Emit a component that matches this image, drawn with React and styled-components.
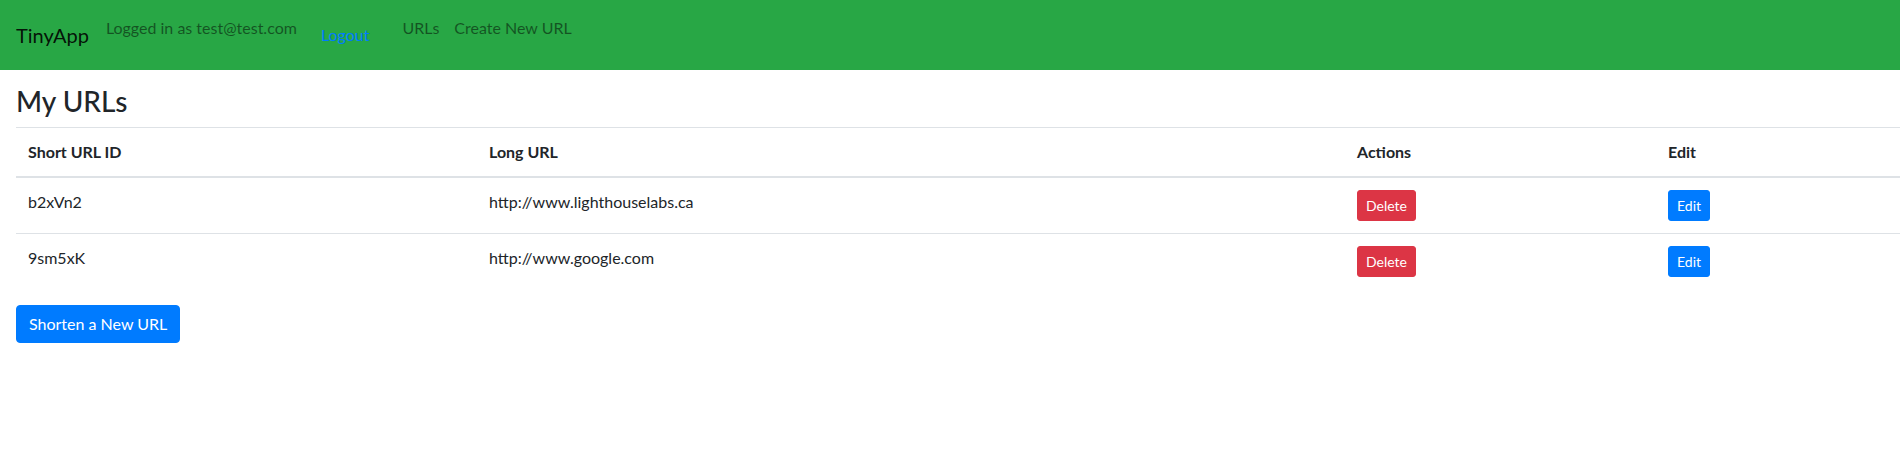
import React from 'react';
import styled, { createGlobalStyle } from 'styled-components';

const GlobalStyle = createGlobalStyle`
  body {
    margin: 0;
    font-family: Lato, "Liberation Sans", sans-serif;
    font-size: 16px;
    line-height: 24px;
    color: #212529;
    background: #ffffff;
  }
`;

const NavBar = styled.nav`
  height: 70px;
  background-color: #28a745;
  display: flex;
  align-items: flex-start;
  padding-left: 16px;
  box-sizing: border-box;
`;

const Brand = styled.div`
  font-size: 20px;
  line-height: 30px;
  padding-top: 20px;
  margin-right: 17px;
  color: rgba(0, 0, 0, 0.9);
`;

const NavText = styled.div`
  padding-top: ${(props) => props.top};
  margin-right: ${(props) => props.gap};
  color: ${(props) => (props.link ? '#007bff' : 'rgba(0, 0, 0, 0.5)')};
  white-space: nowrap;
`;

const Main = styled.div`
  padding-left: 16px;
`;

const Title = styled.h3`
  margin: 15px 0 8px;
  font-size: 28px;
  line-height: 33.6px;
  font-weight: 500;
`;

const Table = styled.table`
  width: 100%;
  table-layout: fixed;
  border-collapse: collapse;
  margin-bottom: 16px;
`;

const Th = styled.th`
  width: ${(props) => props.width || 'auto'};
  text-align: left;
  font-weight: 700;
  padding: 12px;
  border-top: 1px solid #dee2e6;
  border-bottom: 2px solid #dee2e6;
  vertical-align: bottom;
`;

const Td = styled.td`
  padding: 12px;
  border-top: 1px solid #dee2e6;
  vertical-align: top;
`;

const SmallButton = styled.button`
  font-family: inherit;
  font-size: 14px;
  line-height: 21px;
  padding: 4px 8px;
  border: 1px solid ${(props) => props.color};
  border-radius: 3px;
  background-color: ${(props) => props.color};
  color: #ffffff;
  cursor: pointer;
  display: block;
`;

const PrimaryButton = styled.button`
  font-family: inherit;
  font-size: 16px;
  line-height: 24px;
  padding: 6px 12px;
  border: 1px solid #007bff;
  border-radius: 4px;
  background-color: #007bff;
  color: #ffffff;
  cursor: pointer;
`;

const urls = [
  { id: 'b2xVn2', long: 'http://www.lighthouselabs.ca' },
  { id: '9sm5xK', long: 'http://www.google.com' },
];

export default function App() {
  return (
    <>
      <GlobalStyle />
      <NavBar>
        <Brand>TinyApp</Brand>
        <NavText top="16px" gap="24px">Logged in as test@test.com</NavText>
        <NavText top="23px" gap="33px" link>Logout</NavText>
        <NavText top="16px" gap="15px">URLs</NavText>
        <NavText top="16px">Create New URL</NavText>
      </NavBar>
      <Main>
        <Title>My URLs</Title>
        <Table>
          <thead>
            <tr>
              <Th width="437px">Short URL ID</Th>
              <Th width="844px">Long URL</Th>
              <Th width="287px">Actions</Th>
              <Th>Edit</Th>
            </tr>
          </thead>
          <tbody>
            {urls.map((u) => (
              <tr key={u.id}>
                <Td>{u.id}</Td>
                <Td>{u.long}</Td>
                <Td>
                  <SmallButton color="#dc3545">Delete</SmallButton>
                </Td>
                <Td>
                  <SmallButton color="#007bff">Edit</SmallButton>
                </Td>
              </tr>
            ))}
          </tbody>
        </Table>
        <PrimaryButton>Shorten a New URL</PrimaryButton>
      </Main>
    </>
  );
}
